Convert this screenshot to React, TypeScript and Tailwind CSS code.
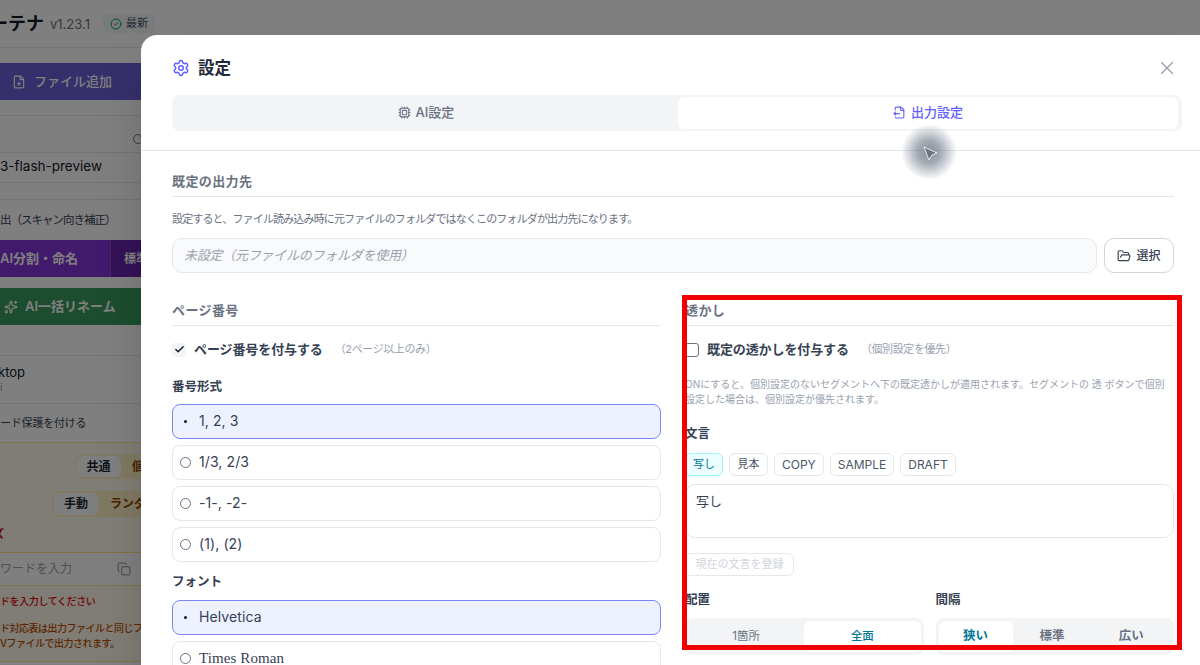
import {
  Check,
  CircleCheck,
  Copy,
  Cpu,
  FileOutput,
  FilePlus,
  FolderOpen,
  RotateCw,
  Settings,
  Sparkles,
  X,
} from "lucide-react";

const FONT = { fontFamily: '"Inter", "Noto Sans CJK JP", sans-serif' };

function Backdrop() {
  return (
    <div className="flex h-full w-[400px] flex-col bg-white text-[#111827]">
      <div className="flex h-[48px] shrink-0 items-center border-b border-gray-200">
        <span className="-ml-[10px] text-[18px] font-bold leading-none">ーテナ</span>
        <span className="ml-[6px] mt-[3px] text-[13px] text-gray-500">v1.23.1</span>
        <span className="ml-[13px] flex h-[19px] w-[52px] items-center justify-center gap-1 rounded-md bg-gray-100 text-[11px] text-gray-600">
          <CircleCheck className="h-3 w-3 text-green-600" />
          最新
        </span>
      </div>
      <div className="h-[68px] shrink-0 border-b border-gray-200 pt-[15px]">
        <div className="flex h-[37px] items-center gap-[8px] bg-[#6a5fd8] pl-[12px] text-[13px] font-medium text-white">
          <FilePlus className="h-[14px] w-[14px]" />
          ファイル追加
        </div>
      </div>
      <div className="flex h-[37px] shrink-0 items-end border-b border-gray-200 pb-[7px] pl-[132px]">
        <RotateCw className="h-3 w-3 text-gray-500" />
      </div>
      <div className="flex h-[30px] shrink-0 items-center border-b border-gray-200 pb-[2px] text-[13.5px]">
        3-flash-preview
      </div>
      <div className="mt-[16px] flex h-[41px] shrink-0 items-center border-t border-gray-200 pt-[2px] text-[11.5px] tracking-[-1px] text-gray-700">
        出（スキャン向き補正）
      </div>
      <div className="flex h-[37px] shrink-0 items-stretch bg-[#8535d8] text-white">
        <div className="flex w-[110px] items-center text-[13px] font-semibold">AI分割・命名</div>
        <div className="flex flex-1 items-center border-l border-white/20 bg-[#6a25b0] pl-[13px] text-[12px] font-semibold">
          標準
        </div>
      </div>
      <div className="mt-[11px] flex h-[37px] shrink-0 items-center gap-[7px] bg-[#389a5e] pl-[4px] text-[13px] font-semibold text-white">
        <Sparkles className="h-[14px] w-[14px]" />
        AI一括リネーム
      </div>
      <div className="mt-[30px] flex h-[49px] shrink-0 flex-col justify-center border-y border-gray-200 text-[13px] leading-[15px]">
        <span className="-ml-[2px]">ktop</span>
        <span className="text-[10px] text-gray-400">i</span>
      </div>
      <div className="flex h-[38px] shrink-0 items-center text-[11px] tracking-[-0.2px] text-gray-700">ード保護を付ける</div>
      <div className="flex h-[220px] shrink-0 flex-col border-y border-amber-200 bg-amber-50">
        <div className="mt-[11px] ml-[75px] flex h-[25px] w-[200px] items-center rounded-lg bg-amber-100 px-[1px] text-[12px] font-semibold text-amber-800">
          <span className="flex h-[21px] w-[45px] items-center justify-center rounded-md bg-white text-gray-800">共通</span>
          <span className="ml-[11px]">個別</span>
        </div>
        <div className="mt-[12px] ml-[52px] flex h-[26px] w-[220px] items-center rounded-lg bg-amber-100 px-[2px] text-[12px] font-semibold text-amber-800">
          <span className="flex h-[22px] w-[44px] items-center justify-center rounded-md bg-white text-gray-800">手動</span>
          <span className="ml-[12px]">ランダム</span>
        </div>
        <div className="mt-[9px] -ml-[7px] h-[26px] text-[11px] font-semibold text-red-700">ズ</div>
        <div className="flex h-[34px] items-center border-y border-amber-200 bg-white text-[12px] text-gray-400">
          <span className="w-[117px]">ワードを入力</span>
          <Copy className="h-[14px] w-[14px]" />
        </div>
        <div className="mt-[8px] text-[10px] font-medium leading-[15px] tracking-[-0.4px] text-red-600">ドを入力してください</div>
        <div className="mt-[12px] whitespace-nowrap text-[10px] font-medium leading-[15px] tracking-[-0.5px] text-amber-700">
          ド対応表は出力ファイルと同じフォルダ
          <br />
          Vファイルで出力されます。
        </div>
      </div>
    </div>
  );
}

function SectionTitle({ children }: { children: React.ReactNode }) {
  return (
    <div className="border-b border-gray-200 pb-[5px] text-[13px] font-semibold leading-[19px] tracking-[0.4px] text-gray-500">
      {children}
    </div>
  );
}

function RadioCard({ label, selected, serif }: { label: string; selected?: boolean; serif?: boolean }) {
  return (
    <div
      className={
        selected
          ? "flex h-[35px] items-center rounded-lg border border-indigo-400 bg-indigo-50 pl-[7px] text-[14px] tracking-[0.1px] text-gray-700"
          : "flex h-[35px] items-center rounded-lg border border-gray-200 bg-white pl-[7px] text-[14px] tracking-[0.1px] text-gray-700"
      }
    >
      {selected ? (
        <span className="flex h-[11px] w-[11px] items-center justify-center">
          <span className="h-[3px] w-[3px] rounded-full bg-gray-900" />
        </span>
      ) : (
        <span className="h-[11px] w-[11px] rounded-full border border-gray-500 bg-white" />
      )}
      <span className={serif ? "ml-[8px] -mt-[1px] text-[15px] [font-family:'Liberation_Serif',serif]" : "ml-[8px] -mt-[2px]"}>{label}</span>
    </div>
  );
}

function Chip({ label, active, latin }: { label: string; active?: boolean; latin?: boolean }) {
  if (active) {
    return (
      <span className="flex h-[23px] items-center rounded-md border border-cyan-200 bg-cyan-50 px-[7px] text-[11px] text-cyan-700">
        {label}
      </span>
    );
  }
  return (
    <span
      className={
        latin
          ? "flex h-[23px] items-center rounded-md border border-gray-200 bg-white px-[7px] text-[12px] text-gray-600"
          : "flex h-[23px] items-center rounded-md border border-gray-200 bg-white px-[7.5px] text-[11px] text-gray-600"
      }
    >
      {label}
    </span>
  );
}

function Modal() {
  return (
    <div className="absolute top-[35px] left-[141px] right-[-12px] h-[700px] rounded-tl-2xl bg-white shadow-2xl">
      <div className="flex h-[60px] items-center justify-between pt-[6px] pr-[34px] pl-[31px]">
        <div className="flex items-center gap-[8px]">
          <Settings className="h-[18px] w-[18px] text-indigo-500" />
          <span className="text-[16.5px] font-bold text-gray-800">設定</span>
        </div>
        <X className="h-[22px] w-[22px] text-gray-400" strokeWidth={1.5} />
      </div>
      <div className="mr-[30px] ml-[31px] flex h-[36px] gap-[2px] rounded-lg bg-gray-100 px-[4px] py-[2px] text-[13px] font-medium">
        <div className="flex flex-1 items-center justify-center gap-[5px] pb-[1px] text-gray-500">
          <Cpu className="h-[13px] w-[13px]" />
          AI設定
        </div>
        <div className="flex flex-1 items-center justify-center gap-[5px] rounded-md bg-white pb-[1px] text-indigo-500">
          <FileOutput className="h-[13px] w-[13px]" />
          出力設定
        </div>
      </div>
      <div className="mt-[19px] border-t border-gray-200 pt-[21px] pr-[38px] pl-[31px]">
        <SectionTitle>既定の出力先</SectionTitle>
        <p className="mt-[14px] text-[11px] leading-[16px] tracking-[-0.85px] text-gray-500">
          設定すると、ファイル読み込み時に元ファイルのフォルダではなくこのフォルダが出力先になります。
        </p>
        <div className="mt-[11px] flex h-[35px] gap-[7px]">
          <div className="flex flex-1 items-center rounded-[10px] border border-gray-200 bg-gray-50 pl-[11px] text-[13px] italic tracking-[-0.25px] text-gray-400">
            未設定（元ファイルのフォルダを使用）
          </div>
          <div className="flex w-[70px] items-center justify-center gap-[5px] rounded-[10px] border border-gray-300 bg-white text-[12px] font-medium text-gray-700">
            <FolderOpen className="h-[14px] w-[14px]" />
            選択
          </div>
        </div>
        <div className="mt-[28px] grid grid-cols-2 gap-x-6">
          <div>
            <SectionTitle>ページ番号</SectionTitle>
            <div className="mt-[15px] flex h-[17px] items-center">
              <span className="flex h-[14px] w-[14px] items-center justify-center rounded-[3px] bg-gray-100 text-gray-900">
                <Check className="h-[11px] w-[11px]" strokeWidth={3} />
              </span>
              <span className="ml-[8px] text-[13px] font-semibold tracking-[-0.1px] text-gray-700">ページ番号を付与する</span>
              <span className="ml-[12px] text-[11px] tracking-[-0.4px] text-gray-400">（2ページ以上のみ）</span>
            </div>
            <div className="mt-[19px] text-[12.5px] font-semibold leading-[20px] text-gray-700">番号形式</div>
            <div className="mt-[7px] flex flex-col gap-[6px]">
              <RadioCard label="1, 2, 3" selected />
              <RadioCard label="1/3, 2/3" />
              <RadioCard label="-1-, -2-" />
              <RadioCard label="(1), (2)" />
            </div>
            <div className="mt-[10px] text-[12.5px] font-semibold leading-[20px] text-gray-700">フォント</div>
            <div className="mt-[8px] flex flex-col gap-[6px]">
              <RadioCard label="Helvetica" selected />
              <RadioCard label="Times Roman" serif />
            </div>
          </div>
          <div>
            <SectionTitle>透かし</SectionTitle>
            <div className="mt-[15px] flex h-[17px] items-center">
              <span className="h-[14px] w-[14px] rounded-[3px] border border-gray-500 bg-white" />
              <span className="ml-[8px] text-[13px] font-semibold tracking-[-0.1px] text-gray-700">既定の透かしを付与する</span>
              <span className="ml-[12px] text-[11px] tracking-[-0.4px] text-gray-400">（個別設定を優先）</span>
            </div>
            <p className="mt-[19px] text-[10px] leading-[15px] text-gray-400">
              ONにすると、個別設定のないセグメントへ下の既定透かしが適用されます。セグメントの 透 ボタンで個別設定した場合は、個別設定が優先されます。
            </p>
            <div className="mt-[17px] text-[12.5px] font-semibold leading-[20px] text-gray-700">文言</div>
            <div className="mt-[9px] flex gap-[6px]">
              <Chip label="写し" active />
              <Chip label="見本" />
              <Chip label="COPY" latin />
              <Chip label="SAMPLE" latin />
              <Chip label="DRAFT" latin />
            </div>
            <div className="mt-[8px] h-[54px] rounded-[10px] border border-gray-200 bg-white px-[10px] py-[7px] text-[13px] leading-[18px] text-gray-700">
              写し
            </div>
            <div className="mt-[15px] flex h-[23px] w-[109px] items-center justify-center rounded-md border border-gray-200 text-[11px] text-gray-300">
              現在の文言を登録
            </div>
            <div className="mt-[14px] grid grid-cols-2 gap-x-3">
              <div>
                <div className="text-[12.5px] font-semibold leading-[20px] text-gray-700">配置</div>
                <div className="mt-[8px] flex h-[37px] rounded-lg bg-gray-100 p-[3px] text-[11.5px]">
                  <span className="flex flex-1 items-center justify-center text-gray-500">1箇所</span>
                  <span className="flex flex-1 items-center justify-center rounded-md bg-white font-medium text-cyan-700">全面</span>
                </div>
              </div>
              <div>
                <div className="text-[12.5px] font-semibold leading-[20px] text-gray-700">間隔</div>
                <div className="mt-[8px] flex h-[37px] rounded-lg bg-gray-100 p-[3px] text-[12.5px] font-semibold">
                  <span className="flex w-[74px] items-center justify-center rounded-md bg-white text-cyan-700">狭い</span>
                  <span className="flex flex-1 items-center justify-center text-gray-500">標準</span>
                  <span className="flex flex-1 items-center justify-center text-gray-500">広い</span>
                </div>
              </div>
            </div>
          </div>
        </div>
      </div>
    </div>
  );
}

export default function App() {
  return (
    <div className="relative h-[665px] w-[1200px] overflow-hidden bg-white" style={FONT}>
      <Backdrop />
      <div className="absolute inset-0 bg-black/50" />
      <Modal />
      {/* pointer highlight */}
      <div className="absolute top-[124px] left-[901px] h-[56px] w-[56px] rounded-full bg-[radial-gradient(circle_closest-side,rgba(71,85,105,0.65)_0%,rgba(71,85,105,0.5)_40%,rgba(71,85,105,0)_100%)]" />
      <svg className="absolute top-[145px] left-[922px]" width="17" height="17" viewBox="0 0 17 17">
        <path d="M2 2 L15 8 L10 10 L7 15 Z" fill="#6b7280" stroke="#fff" strokeWidth="0.8" strokeLinejoin="round" />
      </svg>
      {/* annotation */}
      <div className="absolute top-[295px] left-[682px] h-[355px] w-[500px] border-[5px] border-[#f00000]" />
    </div>
  );
}
